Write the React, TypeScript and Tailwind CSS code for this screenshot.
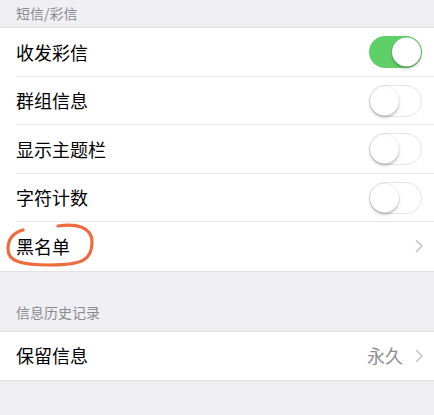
import React, { useState } from 'react';

const font = { fontFamily: '"Noto Sans CJK SC", "Noto Sans", sans-serif' };

function Toggle({ on, onChange }: { on: boolean; onChange: () => void }) {
  return (
    <button
      onClick={onChange}
      className={`relative w-[53px] h-[32px] rounded-full transition-colors ${
        on ? 'bg-[#5fd068]' : 'bg-white border-[1.5px] border-[#e5e5ea]'
      }`}
    >
      <span
        className={`absolute top-1/2 -translate-y-1/2 w-[29px] h-[29px] rounded-full bg-white shadow-[0_2px_3px_rgba(0,0,0,0.25),0_0_1px_rgba(0,0,0,0.2)] ${
          on ? 'right-[1px]' : 'left-[0px]'
        }`}
      />
    </button>
  );
}

function Chevron() {
  return (
    <svg width="9" height="14" viewBox="0 0 9 14" fill="none">
      <path d="M1.5 1.5 L7 7 L1.5 12.5" stroke="#c4c4c9" strokeWidth="1.6" strokeLinecap="round" strokeLinejoin="round" />
    </svg>
  );
}

function Row({ children, last }: { children: React.ReactNode; last?: boolean }) {
  return (
    <div className="relative h-[48.5px] flex items-center pl-[16px] pr-[12px]">
      {children}
      {!last && <div className="absolute bottom-0 left-[16px] right-0 h-px bg-[#e6e6ea]" />}
    </div>
  );
}

export default function App() {
  const [toggles, setToggles] = useState({ mms: true, group: false, subject: false, count: false });
  const flip = (k: keyof typeof toggles) => setToggles({ ...toggles, [k]: !toggles[k] });

  const items: { key: keyof typeof toggles; label: string }[] = [
    { key: 'mms', label: '收发彩信' },
    { key: 'group', label: '群组信息' },
    { key: 'subject', label: '显示主题栏' },
    { key: 'count', label: '字符计数' },
  ];

  return (
    <div className="w-[434px] h-[415px] bg-[#efeff4] overflow-hidden" style={font}>
      {/* SMS/MMS section */}
      <div className="h-[27px] pl-[16px] flex items-center text-[14px] text-[#8a8a8f]">短信/彩信</div>
      <div className="bg-white border-y border-[#e0e0e4]">
        {items.map((it) => (
          <Row key={it.key}>
            <span className="flex-1 text-[18px] text-black">{it.label}</span>
            <Toggle on={toggles[it.key]} onChange={() => flip(it.key)} />
          </Row>
        ))}
        <Row last>
          <span className="flex-1 text-[18px] text-black">黑名单</span>
          <span className="-mr-[2px]">
            <Chevron />
          </span>
          {/* hand-drawn marker circle */}
          <svg className="absolute left-0 top-0 pointer-events-none" width="110" height="49" viewBox="0 0 110 49" fill="none">
            <path
              d="M58 4 C76 1, 92 5, 92 20 C92 37, 84 43, 50 43 C20 43, 8 39, 8 27 C8 18, 12 11, 23 8"
              stroke="#f06b3c"
              strokeWidth="3.2"
              strokeLinecap="round"
            />
          </svg>
        </Row>
      </div>

      {/* history section */}
      <div className="h-[59px] pl-[16px] pb-[8px] flex items-end text-[14px] text-[#8a8a8f]">信息历史记录</div>
      <div className="bg-white border-y border-[#e0e0e4]">
        <Row last>
          <span className="flex-1 text-[18px] text-black">保留信息</span>
          <span className="text-[18px] text-[#8e8e93] mr-[12px]">永久</span>
          <span className="-mr-[2px]">
            <Chevron />
          </span>
        </Row>
      </div>
    </div>
  );
}
